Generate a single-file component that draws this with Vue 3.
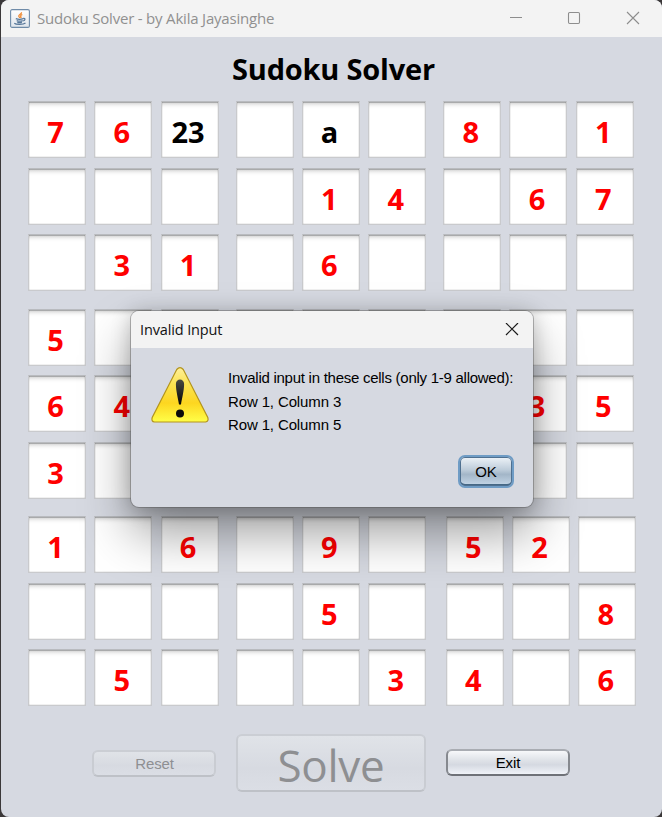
<script setup>
const lines = [
  [['7', '6', '23'], ['', 'a', ''], ['8', '', '1']],
  [['', '', ''], ['', '1', '4'], ['', '6', '7']],
  [['', '3', '1'], ['', '6', ''], ['', '', '']],
  [['5', '', ''], ['', '', ''], ['', '', '']],
  [['6', '4', ''], ['', '', ''], ['', '3', '5']],
  [['3', '', ''], ['', '', ''], ['', '', '']],
  [['1', '', '6'], ['', '9', ''], ['5', '2', '']],
  [['', '', ''], ['', '5', ''], ['', '', '8']],
  [['', '5', ''], ['', '', '3'], ['4', '', '6']],
]
const bands = [lines.slice(0, 3), lines.slice(3, 6), lines.slice(6, 9)]
const isInvalid = (v) => v !== '' && !/^[1-9]$/.test(v)
</script>

<template>
  <div class="desktop">
    <main class="window">
      <header class="bar">
        <svg class="java" width="20" height="19" viewBox="0 0 20 19">
          <defs>
            <linearGradient id="jv" x1="0" y1="0" x2="0" y2="1">
              <stop offset="0" stop-color="#fff" />
              <stop offset="1" stop-color="#dfe5ec" />
            </linearGradient>
          </defs>
          <rect x=".6" y=".6" width="18.8" height="17.8" rx="1.5" fill="url(#jv)" stroke="#6f8ba8" stroke-width="1.1" />
          <path d="M11.5 3.2c.6 1.8-3.4 2.5-2.7 4.2.2.7 1 1 1 1.7M12.3 5.5c-1.5.6-2.2 1.3-1.4 2.3.3.5.2.9-.2 1.3" fill="none" stroke="#f08a32" stroke-width="1.3" />
          <path d="M5.8 9.7c2 .7 5.5.7 7.5 0M6.7 11.6c1.8.7 4.3.7 6 0M7.3 13.3c1.5.5 3.2.5 4.6 0M13.3 9.4c2.2-.5 2.2 1.9-.2 2.6M4.3 14.2c1.6 1.7 9 1.7 11.2-.1" fill="none" stroke="#58789a" stroke-width="1.3" />
        </svg>
        <span class="caption">Sudoku Solver - by Akila Jayasinghe</span>
        <svg class="controls" width="130" height="14" viewBox="0 0 130 14" fill="none" stroke="#8d8d8d" stroke-width="1.1">
          <path d="M0 6.5h12" />
          <rect x="58.5" y="1.5" width="11" height="11" rx="1.2" />
          <path d="M117 1l12 12M129 1l-12 12" />
        </svg>
      </header>

      <h1 class="title"><span>Sudoku Solver</span></h1>

      <section class="board">
        <div v-for="(band, b) in bands" :key="b" class="band" :class="{ wide: b === 2 }">
          <div v-for="(line, r) in band" :key="r" class="line">
            <div v-for="(trio, t) in line" :key="t" class="trio">
              <div v-for="(v, c) in trio" :key="c" class="cell" :class="{ invalid: isInvalid(v) }">{{ v }}</div>
            </div>
          </div>
        </div>
      </section>

      <footer class="actions">
        <button class="btn small reset off" disabled>Reset</button>
        <button class="btn solve off" disabled><span>Solve</span></button>
        <button class="btn small exit">Exit</button>
      </footer>
    </main>

    <section class="dialog" role="dialog">
      <header class="dialog-bar">
        <span>Invalid Input</span>
        <svg width="14" height="14" viewBox="0 0 14 14" fill="none" stroke="#1a1a1a" stroke-width="1.2">
          <path d="M1 0l12 12M13 0L1 12" />
        </svg>
      </header>
      <div class="dialog-body">
        <svg class="warn" width="60" height="58" viewBox="0 0 60 58">
          <defs>
            <linearGradient id="wy" x1="0" y1="0" x2="0" y2="1">
              <stop offset="0" stop-color="#fff09a" />
              <stop offset=".3" stop-color="#fbe352" />
              <stop offset=".65" stop-color="#fdd620" />
              <stop offset="1" stop-color="#ffff48" />
            </linearGradient>
            <linearGradient id="wk" x1="0" y1="0" x2="0" y2="1">
              <stop offset="0" stop-color="#4a4a42" />
              <stop offset="1" stop-color="#050505" />
            </linearGradient>
          </defs>
          <path d="M26.7 3.5Q30 -.2 33.3 3.5L57.8 51.5Q59 55.3 55.5 56H4.500Q1 55.5 2.2 51.5Z" fill="url(#wy)" stroke="#b3941c" stroke-width="1.2" />
          <path d="M25.9 18c0-6 8.2-6 8.2 0 0 7-2.3 15-3.1 20.5h-2C28.2 33 25.9 25 25.9 18z" fill="url(#wk)" />
          <circle cx="30" cy="47.5" r="4" fill="#0b0b0b" />
        </svg>
        <div class="message">
          <p class="first">Invalid input in these cells (only 1-9 allowed):</p>
          <p>Row 1, Column 3</p>
          <p>Row 1, Column 5</p>
        </div>
      </div>
      <div class="dialog-foot"><button class="ok">OK</button></div>
    </section>
  </div>
</template>

<style>
body { background: #222; }
</style>

<style scoped>
* { box-sizing: border-box; }
.desktop {
  position: relative;
  width: 662px;
  height: 817px;
  padding-left: 1px;
  overflow: hidden;
  background: #3b3839;
}
.window {
  height: 817px;
  background: #d6d9e1;
  border-radius: 8px;
  overflow: hidden;
  display: flex;
  flex-direction: column;
}
.bar {
  height: 37px;
  flex: none;
  background: #f3f3f3;
  display: flex;
  align-items: center;
  padding: 0 22px 1px 9px;
}
.caption {
  margin-left: 7px;
  font: 15px/20px "Open Sans", sans-serif;
  letter-spacing: -0.2px;
  color: #909090;
  white-space: nowrap;
}
.controls { margin-left: auto; }
.title {
  margin: 0;
  height: 64px;
  flex: none;
  padding-top: 12px;
  padding-left: 4px;
  text-align: center;
  font: 700 29px/40px "Open Sans", sans-serif;
  letter-spacing: -0.2px;
  color: #000;
}
.board {
  flex: none;
  padding-left: 27px;
  display: flex;
  flex-direction: column;
  gap: 17.7px;
}
.band { display: flex; flex-direction: column; gap: 9.5px; }
.line { display: flex; gap: 17px; }
.wide .trio:last-child { margin-left: 2.5px; }
.trio { display: flex; gap: 8.3px; }
.cell {
  width: 58px;
  height: 57px;
  padding: 4px 3px 0 0;
  text-align: center;
  border: 1px solid #c9cacd;
  border-top-color: #b9bbbf;
  background: linear-gradient(#a9aaab 1px, #d9d9d9 1px, #efefef 3px, #fbfbfb 5px, #fff 7px);
  box-shadow: inset 1px 0 rgba(0, 0, 0, .06), inset -1px 0 rgba(0, 0, 0, .06), inset 0 -1px #f0f0f0;
  font: 700 29px/52px "Open Sans", sans-serif;
  color: #ff0000;
}
.invalid { color: #000; }
.actions {
  display: flex;
  align-items: center;
  margin-top: 27.3px;
  padding-left: 91px;
  height: 58px;
}
.btn {
  padding: 0;
  border: 2px solid #85888e;
  border-radius: 6px;
  font: 15px/20px "Liberation Sans", sans-serif;
  letter-spacing: -0.1px;
  color: #000;
  background: linear-gradient(#f7f8fa, #e2e5ea 35%, #d5d9e1 60%, #f0f3f8);
}
.small { width: 124px; height: 27px; }
.reset { padding: 1px 0 0 1px; margin-top: 1px; }
.btn.off {
  color: #8e8f92;
  border-color: #cbced4 #c9ccd2 #bec1c7;
  background: linear-gradient(#e0e3e8, #d7dae1 60%, #dbdee5);
}
.solve {
  width: 190px;
  height: 58px;
  margin: 0 20px 0 20px;
}
.solve span {
  display: block;
  font: 44px/50px "Open Sans", sans-serif;
  letter-spacing: -0.3px;
  padding-top: 4px;
}
.exit {
  border-color: #a9acb2 #86898f #6f7278;
}
.dialog {
  position: absolute;
  left: 131px;
  top: 311px;
  width: 402px;
  height: 196px;
  background: #d6d9e1;
  border-radius: 8px;
  box-shadow: 0 0 0 1px rgba(80, 80, 80, .4), 0 26px 50px rgba(0, 0, 0, .38), 0 2px 20px rgba(0, 0, 0, .22);
}
.dialog-bar {
  display: flex;
  align-items: center;
  justify-content: space-between;
  height: 37px;
  padding: 0 14px 0 9px;
  background: #f3f3f3;
  border-radius: 8px 8px 0 0;
  font: 14.5px/20px "Open Sans", sans-serif;
  letter-spacing: -0.13px;
  color: #111;
}
.dialog-body { display: flex; padding: 18px 0 0 19px; }
.message { margin-left: 18px; }
.message p {
  margin: 0;
  font: 15px/23.5px "Liberation Sans", sans-serif;
  letter-spacing: -0.13px;
  color: #000;
  white-space: nowrap;
}
.message .first { letter-spacing: -0.26px; }
.dialog-foot { display: flex; justify-content: flex-end; padding: 18px 19px 0 0; }
.ok {
  width: 56px;
  height: 33px;
  padding: 2px 0 0;
  border: 2px solid #6f9cc5;
  border-radius: 7px;
  background: linear-gradient(#eef3f8, #bccbd9 45%, #a3b6c8 60%, #c6d8e9);
  box-shadow: inset 0 0 0 1px #4f7090, inset 0 -2px #466885;
  font: 15px/20px "Liberation Sans", sans-serif;
  letter-spacing: -0.2px;
}
</style>
